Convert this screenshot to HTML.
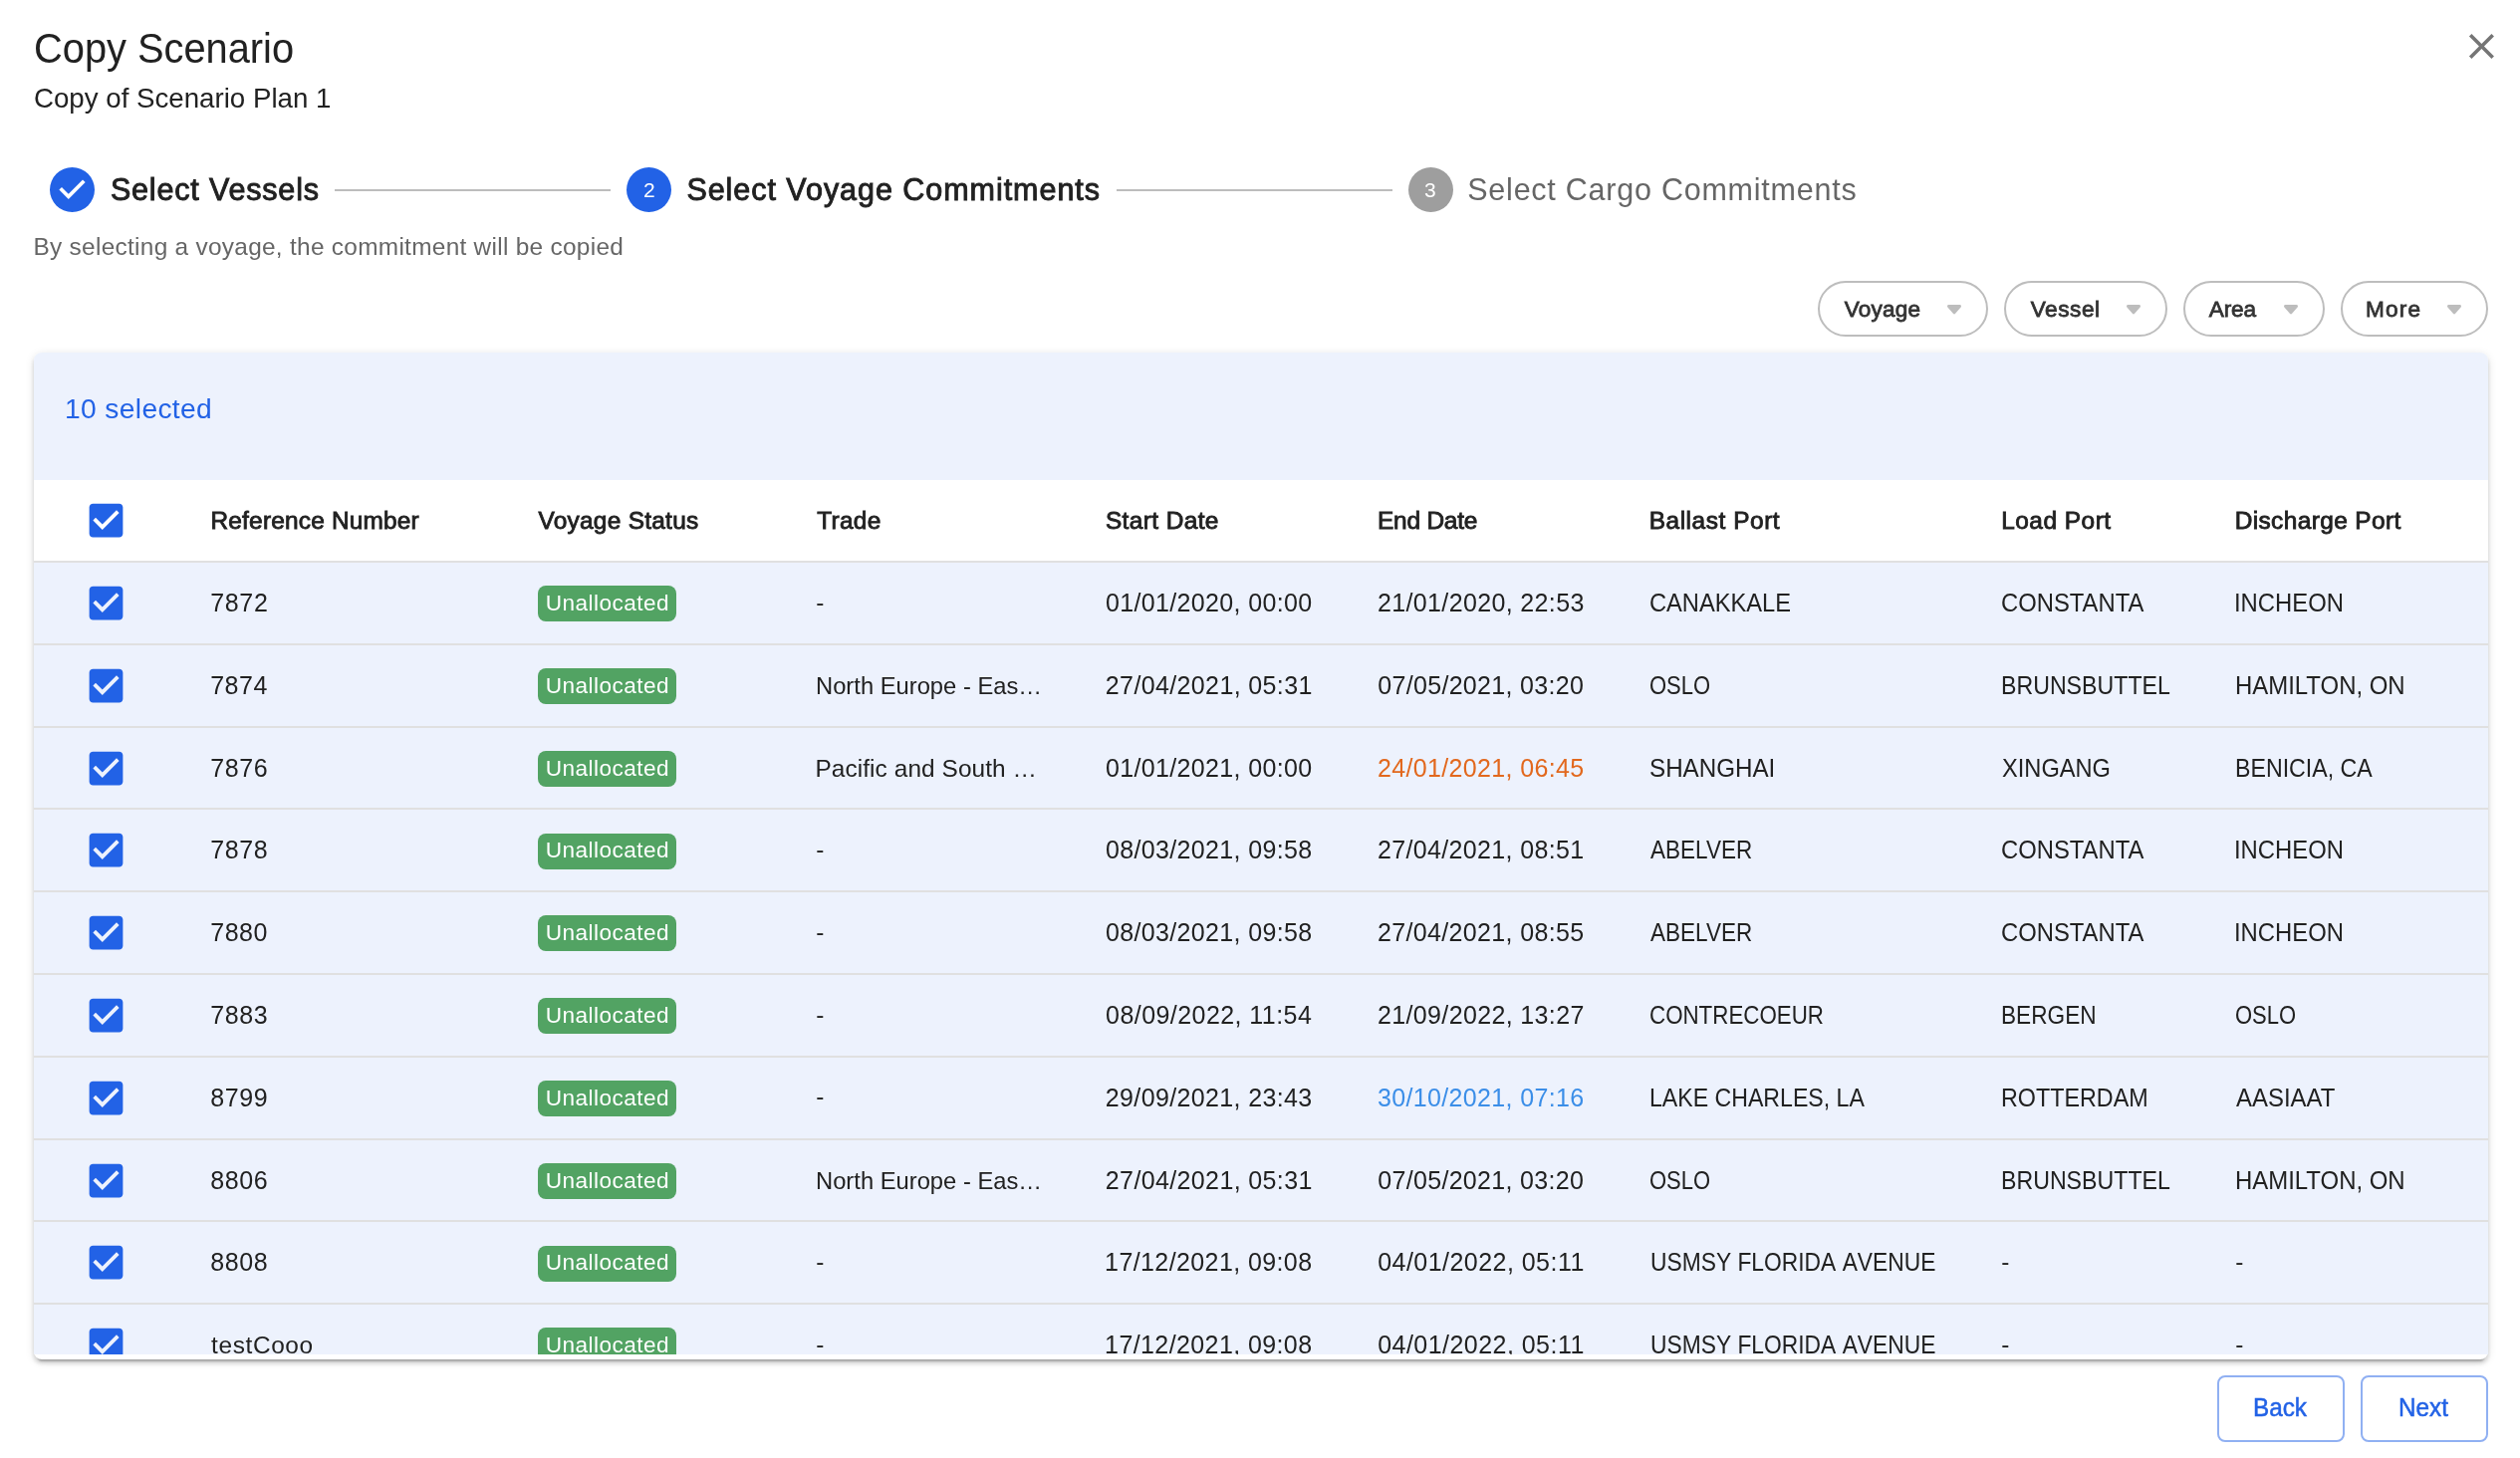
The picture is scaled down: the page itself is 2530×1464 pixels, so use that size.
<!DOCTYPE html>
<html lang="en">
<head>
<meta charset="utf-8">
<title>Copy Scenario</title>
<style>
html,body{margin:0;padding:0;background:#fff;}
body{width:2530px;height:1464px;position:relative;overflow:hidden;font-family:"Liberation Sans", sans-serif;color:#212121;}
#root{position:absolute;left:0;top:0;width:2530px;height:1464px;will-change:transform;}
.t{position:absolute;white-space:nowrap;line-height:1;margin:0;transform-origin:0 0;}
.abs{position:absolute;}
svg{position:absolute;display:block;overflow:visible;}
.paper{position:absolute;left:34px;top:354px;width:2464px;height:1011px;background:#fff;border-radius:8px;
 box-shadow:0 6px 2px -4px rgba(0,0,0,.2),0 4px 4px 0 rgba(0,0,0,.14),0 2px 10px 0 rgba(0,0,0,.12);}
.clip{position:absolute;left:0;top:0;width:2464px;height:1006px;overflow:hidden;border-radius:8px 8px 0 0;}
.toolbar{position:absolute;left:0;top:0;width:2464px;height:128px;background:#edf2fd;}
.hrow{position:absolute;left:0;top:128px;width:2464px;height:81px;background:#fff;border-bottom:2px solid #e0e0e0;}
.row{position:absolute;left:0;width:2464px;background:#edf2fd;border-bottom:2px solid #e0e0e0;}
.status{position:absolute;left:506px;width:139px;height:36px;border-radius:8px;background:#52a363;}
.fchip{position:absolute;top:282px;height:52px;border:2px solid #bdbdbd;border-radius:28px;background:#fff;}
.btn{position:absolute;top:1381px;width:124px;height:63px;border:2px solid #90b0f2;border-radius:8px;background:#fff;}
.conn{position:absolute;top:190px;height:2px;background:#bdbdbd;}
.dot{position:absolute;top:168px;width:45px;height:45px;border-radius:50%;}
</style>
</head>
<body>
<div id="root">
<h1 style="margin:0;font-weight:400"><span class="t" style="left:33.96px;top:27px;color:#212121;font-size:42.6px;transform:scaleX(0.9345);">Copy Scenario</span></h1>
<span class="t" style="left:33.8px;top:85px;color:#212121;font-size:28px;transform:scaleX(0.9882);">Copy of Scenario Plan 1</span>
<svg style="left:2469.9px;top:25px" width="42.9" height="42.9" viewBox="0 0 24 24"><path fill="#757575" d="M19 6.41L17.59 5 12 10.59 6.41 5 5 6.41 10.59 12 5 17.59 6.41 19 12 13.41 17.59 19 19 17.59 13.41 12z"/></svg>
<svg style="left:50px;top:168px" width="45" height="45" viewBox="0 0 24 24"><path fill="#2262e6" d="M12 0a12 12 0 1 0 0 24 12 12 0 0 0 0-24zm-2 17l-5-5 1.4-1.4 3.6 3.6 7.6-7.6L19 8l-9 9z"/></svg>
<span class="t" style="left:110.89px;top:175px;color:#212121;font-size:30.5px;letter-spacing:0.83px;-webkit-text-stroke:0.9px currentColor;">Select Vessels</span>
<div class="conn" style="left:336px;width:277px"></div>
<div class="dot" style="left:628.8px;background:#2262e6"></div>
<span class="t" style="left:646.05px;top:180px;color:#ffffff;font-size:21px;">2</span>
<span class="t" style="left:689.39px;top:175px;color:#212121;font-size:30.5px;letter-spacing:0.96px;-webkit-text-stroke:0.9px currentColor;">Select Voyage Commitments</span>
<div class="conn" style="left:1121px;width:277px"></div>
<div class="dot" style="left:1413.5px;background:#9e9e9e"></div>
<span class="t" style="left:1430.09px;top:180px;color:#ffffff;font-size:21px;">3</span>
<span class="t" style="left:1473.27px;top:175px;color:#666666;font-size:30.5px;letter-spacing:0.76px;">Select Cargo Commitments</span>
<span class="t" style="left:33.5px;top:236px;color:#666666;font-size:24.4px;letter-spacing:0.29px;">By selecting a voyage, the commitment will be copied</span>
<div class="fchip" style="left:1825px;width:167px"></div>
<span class="t" style="left:1851.8px;top:300px;color:#333333;font-size:22.6px;letter-spacing:0.18px;-webkit-text-stroke:0.8px currentColor;">Voyage</span>
<svg style="left:1955px;top:305.7px" width="14" height="9.4" viewBox="0 0 14 9.4"><path fill="#bdbdbd" stroke="#bdbdbd" stroke-width="3" stroke-linejoin="round" d="M1.5 1.5H12.5L7 7.9Z"/></svg>
<div class="fchip" style="left:2012px;width:160px"></div>
<span class="t" style="left:2038.7px;top:300px;color:#333333;font-size:22.6px;letter-spacing:0.56px;-webkit-text-stroke:0.8px currentColor;">Vessel</span>
<svg style="left:2135px;top:305.7px" width="14" height="9.4" viewBox="0 0 14 9.4"><path fill="#bdbdbd" stroke="#bdbdbd" stroke-width="3" stroke-linejoin="round" d="M1.5 1.5H12.5L7 7.9Z"/></svg>
<div class="fchip" style="left:2192px;width:137.5px"></div>
<span class="t" style="left:2217.72px;top:300px;color:#333333;font-size:22.6px;letter-spacing:-0.13px;-webkit-text-stroke:0.8px currentColor;">Area</span>
<svg style="left:2292.5px;top:305.7px" width="14" height="9.4" viewBox="0 0 14 9.4"><path fill="#bdbdbd" stroke="#bdbdbd" stroke-width="3" stroke-linejoin="round" d="M1.5 1.5H12.5L7 7.9Z"/></svg>
<div class="fchip" style="left:2350px;width:144px"></div>
<span class="t" style="left:2375.1px;top:300px;color:#333333;font-size:22.6px;letter-spacing:1.18px;-webkit-text-stroke:0.8px currentColor;">More</span>
<svg style="left:2457px;top:305.7px" width="14" height="9.4" viewBox="0 0 14 9.4"><path fill="#bdbdbd" stroke="#bdbdbd" stroke-width="3" stroke-linejoin="round" d="M1.5 1.5H12.5L7 7.9Z"/></svg>
<div class="paper"><div class="clip">
<div class="toolbar"></div>
<span class="t" style="left:31.09px;top:42px;color:#2262e6;font-size:28.2px;letter-spacing:0.35px;">10 selected</span>
<div class="hrow"></div>
<svg style="left:49.9px;top:146px" width="45" height="45" viewBox="0 0 24 24"><path fill="#2262e6" d="M19 3H5c-1.11 0-2 .9-2 2v14c0 1.1.89 2 2 2h14c1.11 0 2-.9 2-2V5c0-1.1-.89-2-2-2zm-9 14l-5-5 1.41-1.41L10 14.17l7.59-7.59L19 8l-9 9z"/></svg>
<span class="t" style="left:177.52px;top:157px;color:#212121;font-size:24.4px;letter-spacing:0.21px;-webkit-text-stroke:0.85px currentColor;">Reference Number</span>
<span class="t" style="left:506.46px;top:157px;color:#212121;font-size:24.4px;letter-spacing:0.29px;-webkit-text-stroke:0.85px currentColor;">Voyage Status</span>
<span class="t" style="left:786.16px;top:157px;color:#212121;font-size:24.4px;letter-spacing:0.31px;-webkit-text-stroke:0.85px currentColor;">Trade</span>
<span class="t" style="left:1075.94px;top:157px;color:#212121;font-size:24.4px;letter-spacing:0.41px;-webkit-text-stroke:0.85px currentColor;">Start Date</span>
<span class="t" style="left:1348.92px;top:157px;color:#212121;font-size:24.4px;letter-spacing:-0.17px;-webkit-text-stroke:0.85px currentColor;">End Date</span>
<span class="t" style="left:1621.67px;top:157px;color:#212121;font-size:24.4px;letter-spacing:0.57px;-webkit-text-stroke:0.85px currentColor;">Ballast Port</span>
<span class="t" style="left:1975.17px;top:157px;color:#212121;font-size:24.4px;letter-spacing:0.52px;-webkit-text-stroke:0.85px currentColor;">Load Port</span>
<span class="t" style="left:2209.67px;top:157px;color:#212121;font-size:24.4px;letter-spacing:0.41px;-webkit-text-stroke:0.85px currentColor;">Discharge Port</span>
<div class="row" style="top:211px;height:81px"></div>
<svg style="left:49.9px;top:229px" width="45" height="45" viewBox="0 0 24 24"><path fill="#2262e6" d="M19 3H5c-1.11 0-2 .9-2 2v14c0 1.1.89 2 2 2h14c1.11 0 2-.9 2-2V5c0-1.1-.89-2-2-2zm-9 14l-5-5 1.41-1.41L10 14.17l7.59-7.59L19 8l-9 9z"/></svg>
<div class="status" style="top:234px"></div>
<div class="row" style="top:294px;height:81px"></div>
<svg style="left:49.9px;top:311.8px" width="45" height="45" viewBox="0 0 24 24"><path fill="#2262e6" d="M19 3H5c-1.11 0-2 .9-2 2v14c0 1.1.89 2 2 2h14c1.11 0 2-.9 2-2V5c0-1.1-.89-2-2-2zm-9 14l-5-5 1.41-1.41L10 14.17l7.59-7.59L19 8l-9 9z"/></svg>
<div class="status" style="top:317px"></div>
<div class="row" style="top:377px;height:80px"></div>
<svg style="left:49.9px;top:394.6px" width="45" height="45" viewBox="0 0 24 24"><path fill="#2262e6" d="M19 3H5c-1.11 0-2 .9-2 2v14c0 1.1.89 2 2 2h14c1.11 0 2-.9 2-2V5c0-1.1-.89-2-2-2zm-9 14l-5-5 1.41-1.41L10 14.17l7.59-7.59L19 8l-9 9z"/></svg>
<div class="status" style="top:400px"></div>
<div class="row" style="top:459px;height:81px"></div>
<svg style="left:49.9px;top:477.4px" width="45" height="45" viewBox="0 0 24 24"><path fill="#2262e6" d="M19 3H5c-1.11 0-2 .9-2 2v14c0 1.1.89 2 2 2h14c1.11 0 2-.9 2-2V5c0-1.1-.89-2-2-2zm-9 14l-5-5 1.41-1.41L10 14.17l7.59-7.59L19 8l-9 9z"/></svg>
<div class="status" style="top:483px"></div>
<div class="row" style="top:542px;height:81px"></div>
<svg style="left:49.9px;top:560.2px" width="45" height="45" viewBox="0 0 24 24"><path fill="#2262e6" d="M19 3H5c-1.11 0-2 .9-2 2v14c0 1.1.89 2 2 2h14c1.11 0 2-.9 2-2V5c0-1.1-.89-2-2-2zm-9 14l-5-5 1.41-1.41L10 14.17l7.59-7.59L19 8l-9 9z"/></svg>
<div class="status" style="top:565px"></div>
<div class="row" style="top:625px;height:81px"></div>
<svg style="left:49.9px;top:643px" width="45" height="45" viewBox="0 0 24 24"><path fill="#2262e6" d="M19 3H5c-1.11 0-2 .9-2 2v14c0 1.1.89 2 2 2h14c1.11 0 2-.9 2-2V5c0-1.1-.89-2-2-2zm-9 14l-5-5 1.41-1.41L10 14.17l7.59-7.59L19 8l-9 9z"/></svg>
<div class="status" style="top:648px"></div>
<div class="row" style="top:708px;height:81px"></div>
<svg style="left:49.9px;top:725.8px" width="45" height="45" viewBox="0 0 24 24"><path fill="#2262e6" d="M19 3H5c-1.11 0-2 .9-2 2v14c0 1.1.89 2 2 2h14c1.11 0 2-.9 2-2V5c0-1.1-.89-2-2-2zm-9 14l-5-5 1.41-1.41L10 14.17l7.59-7.59L19 8l-9 9z"/></svg>
<div class="status" style="top:731px"></div>
<div class="row" style="top:791px;height:80px"></div>
<svg style="left:49.9px;top:808.6px" width="45" height="45" viewBox="0 0 24 24"><path fill="#2262e6" d="M19 3H5c-1.11 0-2 .9-2 2v14c0 1.1.89 2 2 2h14c1.11 0 2-.9 2-2V5c0-1.1-.89-2-2-2zm-9 14l-5-5 1.41-1.41L10 14.17l7.59-7.59L19 8l-9 9z"/></svg>
<div class="status" style="top:814px"></div>
<div class="row" style="top:873px;height:81px"></div>
<svg style="left:49.9px;top:891.4px" width="45" height="45" viewBox="0 0 24 24"><path fill="#2262e6" d="M19 3H5c-1.11 0-2 .9-2 2v14c0 1.1.89 2 2 2h14c1.11 0 2-.9 2-2V5c0-1.1-.89-2-2-2zm-9 14l-5-5 1.41-1.41L10 14.17l7.59-7.59L19 8l-9 9z"/></svg>
<div class="status" style="top:897px"></div>
<div class="row" style="top:956px;height:81px"></div>
<svg style="left:49.9px;top:974.2px" width="45" height="45" viewBox="0 0 24 24"><path fill="#2262e6" d="M19 3H5c-1.11 0-2 .9-2 2v14c0 1.1.89 2 2 2h14c1.11 0 2-.9 2-2V5c0-1.1-.89-2-2-2zm-9 14l-5-5 1.41-1.41L10 14.17l7.59-7.59L19 8l-9 9z"/></svg>
<div class="status" style="top:979px"></div>
<span class="t" style="left:177.2px;top:239px;color:#212121;font-size:25px;letter-spacing:0.68px;">7872</span>
<span class="t" style="left:513.65px;top:241px;color:#ffffff;font-size:22.6px;letter-spacing:0.46px;">Unallocated</span>
<span class="t" style="left:785.15px;top:239px;color:#212121;font-size:24.4px;">-</span>
<span class="t" style="left:1076.08px;top:239px;color:#212121;font-size:25px;letter-spacing:0.34px;">01/01/2020, 00:00</span>
<span class="t" style="left:1348.98px;top:239px;color:#212121;font-size:25px;letter-spacing:0.36px;">21/01/2020, 22:53</span>
<span class="t" style="left:1622.23px;top:239px;color:#212121;font-size:25.2px;transform:scaleX(0.9391);">CANAKKALE</span>
<span class="t" style="left:1975.48px;top:239px;color:#212121;font-size:25.2px;transform:scaleX(0.9458);">CONSTANTA</span>
<span class="t" style="left:2209.27px;top:239px;color:#212121;font-size:25.2px;transform:scaleX(0.9460);">INCHEON</span>
<span class="t" style="left:177.2px;top:322px;color:#212121;font-size:25px;letter-spacing:0.51px;">7874</span>
<span class="t" style="left:513.65px;top:324px;color:#ffffff;font-size:22.6px;letter-spacing:0.46px;">Unallocated</span>
<span class="t" style="left:784.5px;top:323px;color:#212121;font-size:24.4px;transform:scaleX(0.9739);">North Europe - Eas…</span>
<span class="t" style="left:1075.83px;top:322px;color:#212121;font-size:25px;letter-spacing:0.37px;">27/04/2021, 05:31</span>
<span class="t" style="left:1349.23px;top:322px;color:#212121;font-size:25px;letter-spacing:0.32px;">07/05/2021, 03:20</span>
<span class="t" style="left:1622.41px;top:322px;color:#212121;font-size:25.2px;transform:scaleX(0.8732);">OSLO</span>
<span class="t" style="left:1974.75px;top:322px;color:#212121;font-size:25.2px;transform:scaleX(0.9194);">BRUNSBUTTEL</span>
<span class="t" style="left:2209.5px;top:322px;color:#212121;font-size:25.2px;transform:scaleX(0.9501);">HAMILTON, ON</span>
<span class="t" style="left:177.2px;top:405px;color:#212121;font-size:25px;letter-spacing:0.59px;">7876</span>
<span class="t" style="left:513.65px;top:407px;color:#ffffff;font-size:22.6px;letter-spacing:0.46px;">Unallocated</span>
<span class="t" style="left:784.5px;top:406px;color:#212121;font-size:24.4px;letter-spacing:0.08px;">Pacific and South …</span>
<span class="t" style="left:1076.08px;top:405px;color:#212121;font-size:25px;letter-spacing:0.34px;">01/01/2021, 00:00</span>
<span class="t" style="left:1348.98px;top:405px;color:#e2681d;font-size:25px;letter-spacing:0.35px;">24/01/2021, 06:45</span>
<span class="t" style="left:1621.99px;top:405px;color:#212121;font-size:25.2px;transform:scaleX(0.9601);">SHANGHAI</span>
<span class="t" style="left:1975.91px;top:405px;color:#212121;font-size:25.2px;transform:scaleX(0.9381);">XINGANG</span>
<span class="t" style="left:2209.5px;top:405px;color:#212121;font-size:25.2px;transform:scaleX(0.9197);">BENICIA, CA</span>
<span class="t" style="left:177.2px;top:487px;color:#212121;font-size:25px;letter-spacing:0.64px;">7878</span>
<span class="t" style="left:513.65px;top:489px;color:#ffffff;font-size:22.6px;letter-spacing:0.46px;">Unallocated</span>
<span class="t" style="left:785.15px;top:487px;color:#212121;font-size:24.4px;">-</span>
<span class="t" style="left:1076.08px;top:487px;color:#212121;font-size:25px;letter-spacing:0.34px;">08/03/2021, 09:58</span>
<span class="t" style="left:1348.98px;top:487px;color:#212121;font-size:25px;letter-spacing:0.35px;">27/04/2021, 08:51</span>
<span class="t" style="left:1623.27px;top:487px;color:#212121;font-size:25.2px;transform:scaleX(0.8937);">ABELVER</span>
<span class="t" style="left:1975.48px;top:487px;color:#212121;font-size:25.2px;transform:scaleX(0.9458);">CONSTANTA</span>
<span class="t" style="left:2209.27px;top:487px;color:#212121;font-size:25.2px;transform:scaleX(0.9460);">INCHEON</span>
<span class="t" style="left:177.2px;top:570px;color:#212121;font-size:25px;letter-spacing:0.54px;">7880</span>
<span class="t" style="left:513.65px;top:572px;color:#ffffff;font-size:22.6px;letter-spacing:0.46px;">Unallocated</span>
<span class="t" style="left:785.15px;top:570px;color:#212121;font-size:24.4px;">-</span>
<span class="t" style="left:1076.08px;top:570px;color:#212121;font-size:25px;letter-spacing:0.34px;">08/03/2021, 09:58</span>
<span class="t" style="left:1348.98px;top:570px;color:#212121;font-size:25px;letter-spacing:0.35px;">27/04/2021, 08:55</span>
<span class="t" style="left:1623.27px;top:570px;color:#212121;font-size:25.2px;transform:scaleX(0.8937);">ABELVER</span>
<span class="t" style="left:1975.48px;top:570px;color:#212121;font-size:25.2px;transform:scaleX(0.9458);">CONSTANTA</span>
<span class="t" style="left:2209.27px;top:570px;color:#212121;font-size:25.2px;transform:scaleX(0.9460);">INCHEON</span>
<span class="t" style="left:177.2px;top:653px;color:#212121;font-size:25px;letter-spacing:0.61px;">7883</span>
<span class="t" style="left:513.65px;top:655px;color:#ffffff;font-size:22.6px;letter-spacing:0.46px;">Unallocated</span>
<span class="t" style="left:785.15px;top:653px;color:#212121;font-size:24.4px;">-</span>
<span class="t" style="left:1076.08px;top:653px;color:#212121;font-size:25px;letter-spacing:0.44px;">08/09/2022, 11:54</span>
<span class="t" style="left:1348.98px;top:653px;color:#212121;font-size:25px;letter-spacing:0.36px;">21/09/2022, 13:27</span>
<span class="t" style="left:1622.3px;top:653px;color:#212121;font-size:25.2px;transform:scaleX(0.8866);">CONTRECOEUR</span>
<span class="t" style="left:1974.75px;top:653px;color:#212121;font-size:25.2px;transform:scaleX(0.8985);">BERGEN</span>
<span class="t" style="left:2210.41px;top:653px;color:#212121;font-size:25.2px;transform:scaleX(0.8732);">OSLO</span>
<span class="t" style="left:177.34px;top:736px;color:#212121;font-size:25px;letter-spacing:0.56px;">8799</span>
<span class="t" style="left:513.65px;top:738px;color:#ffffff;font-size:22.6px;letter-spacing:0.46px;">Unallocated</span>
<span class="t" style="left:785.15px;top:735px;color:#212121;font-size:24.4px;">-</span>
<span class="t" style="left:1075.83px;top:736px;color:#212121;font-size:25px;letter-spacing:0.36px;">29/09/2021, 23:43</span>
<span class="t" style="left:1348.99px;top:736px;color:#3b8ee8;font-size:25px;letter-spacing:0.35px;">30/10/2021, 07:16</span>
<span class="t" style="left:1621.5px;top:736px;color:#212121;font-size:25.2px;transform:scaleX(0.9178);">LAKE CHARLES, LA</span>
<span class="t" style="left:1974.75px;top:736px;color:#212121;font-size:25.2px;transform:scaleX(0.9255);">ROTTERDAM</span>
<span class="t" style="left:2211.26px;top:736px;color:#212121;font-size:25.2px;transform:scaleX(0.9505);">AASIAAT</span>
<span class="t" style="left:177.34px;top:819px;color:#212121;font-size:25px;letter-spacing:0.57px;">8806</span>
<span class="t" style="left:513.65px;top:821px;color:#ffffff;font-size:22.6px;letter-spacing:0.46px;">Unallocated</span>
<span class="t" style="left:784.5px;top:820px;color:#212121;font-size:24.4px;transform:scaleX(0.9739);">North Europe - Eas…</span>
<span class="t" style="left:1075.83px;top:819px;color:#212121;font-size:25px;letter-spacing:0.37px;">27/04/2021, 05:31</span>
<span class="t" style="left:1349.23px;top:819px;color:#212121;font-size:25px;letter-spacing:0.32px;">07/05/2021, 03:20</span>
<span class="t" style="left:1622.41px;top:819px;color:#212121;font-size:25.2px;transform:scaleX(0.8732);">OSLO</span>
<span class="t" style="left:1974.75px;top:819px;color:#212121;font-size:25.2px;transform:scaleX(0.9194);">BRUNSBUTTEL</span>
<span class="t" style="left:2209.5px;top:819px;color:#212121;font-size:25.2px;transform:scaleX(0.9501);">HAMILTON, ON</span>
<span class="t" style="left:177.34px;top:901px;color:#212121;font-size:25px;letter-spacing:0.55px;">8808</span>
<span class="t" style="left:513.65px;top:903px;color:#ffffff;font-size:22.6px;letter-spacing:0.46px;">Unallocated</span>
<span class="t" style="left:785.15px;top:901px;color:#212121;font-size:24.4px;">-</span>
<span class="t" style="left:1075.1px;top:901px;color:#212121;font-size:25px;letter-spacing:0.40px;">17/12/2021, 09:08</span>
<span class="t" style="left:1349.23px;top:901px;color:#212121;font-size:25px;letter-spacing:0.46px;">04/01/2022, 05:11</span>
<span class="t" style="left:1622.55px;top:901px;color:#212121;font-size:25.2px;transform:scaleX(0.9055);font-kerning:none;">USMSY FLORIDA AVENUE</span>
<span class="t" style="left:1975.15px;top:901px;color:#212121;font-size:24.4px;">-</span>
<span class="t" style="left:2210.15px;top:901px;color:#212121;font-size:24.4px;">-</span>
<span class="t" style="left:178.11px;top:985px;color:#212121;font-size:24.4px;letter-spacing:0.62px;">testCooo</span>
<span class="t" style="left:513.65px;top:986px;color:#ffffff;font-size:22.6px;letter-spacing:0.46px;">Unallocated</span>
<span class="t" style="left:785.15px;top:984px;color:#212121;font-size:24.4px;">-</span>
<span class="t" style="left:1075.1px;top:984px;color:#212121;font-size:25px;letter-spacing:0.40px;">17/12/2021, 09:08</span>
<span class="t" style="left:1349.23px;top:984px;color:#212121;font-size:25px;letter-spacing:0.46px;">04/01/2022, 05:11</span>
<span class="t" style="left:1622.55px;top:984px;color:#212121;font-size:25.2px;transform:scaleX(0.9055);font-kerning:none;">USMSY FLORIDA AVENUE</span>
<span class="t" style="left:1975.15px;top:984px;color:#212121;font-size:24.4px;">-</span>
<span class="t" style="left:2210.15px;top:984px;color:#212121;font-size:24.4px;">-</span>
</div></div>
<div class="btn" style="left:2226px"></div>
<span class="t" style="left:2262.45px;top:1401px;color:#2262e6;font-size:25.3px;transform:scaleX(0.9600);-webkit-text-stroke:0.5px currentColor;">Back</span>
<div class="btn" style="left:2370px"></div>
<span class="t" style="left:2408.45px;top:1401px;color:#2262e6;font-size:25.3px;transform:scaleX(0.9613);-webkit-text-stroke:0.5px currentColor;">Next</span>
</div>
</body>
</html>
